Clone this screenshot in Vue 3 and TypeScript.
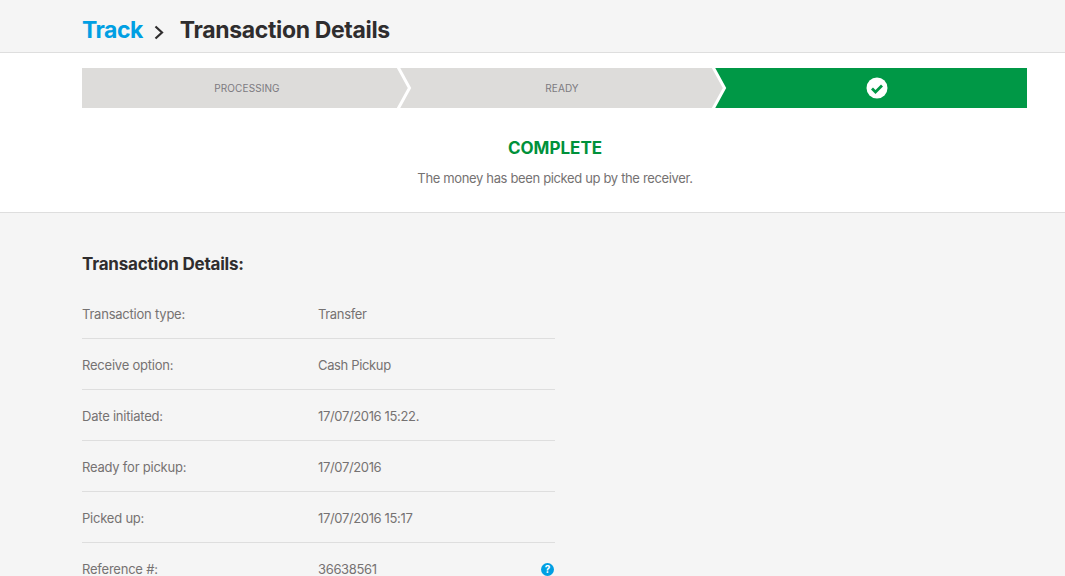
<script setup lang="ts">
const rows = [
  { label: "Transaction type:", value: "Transfer" },
  { label: "Receive option:", value: "Cash Pickup" },
  { label: "Date initiated:", value: "17/07/2016 15:22." },
  { label: "Ready for pickup:", value: "17/07/2016" },
  { label: "Picked up:", value: "17/07/2016 15:17" },
  { label: "Reference #:", value: "36638561", help: true },
]
</script>

<template>
  <div class="page">
    <header class="top">
      <a class="crumb">Track</a>
      <svg class="sep" width="12" height="16" viewBox="0 0 12 16">
        <path d="M2.5 2.5 L9 8.5 L2.5 14.5" fill="none" stroke="#2f2d2e" stroke-width="2.2" />
      </svg>
      <h1>Transaction Details</h1>
    </header>

    <section class="status">
      <div class="steps">
        <div class="step">
          <span class="stepText">PROCESSING</span>
          <svg class="chev" width="18" height="40" viewBox="0 0 18 40">
            <path d="M0 0 L2 0 L13 20 L2 40 L0 40 Z" fill="#dddcda" />
            <path d="M2 -1 L13.5 20 L2 41" fill="none" stroke="#fff" stroke-width="3" />
          </svg>
        </div>
        <div class="step">
          <span class="stepText">READY</span>
          <svg class="chev" width="18" height="40" viewBox="0 0 18 40">
            <path d="M0 0 L2 0 L13 20 L2 40 L0 40 Z" fill="#dddcda" />
            <path d="M2 -1 L13.5 20 L2 41" fill="none" stroke="#fff" stroke-width="3" />
          </svg>
        </div>
        <div class="step done">
          <svg width="22" height="22" viewBox="0 0 22 22">
            <circle cx="11" cy="11" r="10.5" fill="#fff" />
            <path d="M6 11.5 L9.5 15 L16 8.5" fill="none" stroke="#009846" stroke-width="2.8" />
          </svg>
        </div>
      </div>
      <h2>COMPLETE</h2>
      <p>The money has been picked up by the receiver.</p>
    </section>

    <section class="details">
      <h3>Transaction Details:</h3>
      <div v-for="row in rows" :key="row.label" class="row">
        <span class="label">{{ row.label }}</span>
        <span class="value">{{ row.value }}</span>
        <svg v-if="row.help" class="help" width="13" height="13" viewBox="0 0 13 13">
          <circle cx="6.5" cy="6.5" r="6.5" fill="#009fe3" />
          <text x="6.5" y="10" text-anchor="middle" font-size="10" font-weight="700" fill="#fff" font-family="Inter, sans-serif">?</text>
        </svg>
      </div>
    </section>
  </div>
</template>

<style>
html, body {
  margin: 0;
  height: 100%;
  overflow: hidden;
  background: #f5f5f5;
}
</style>

<style scoped>
.page {
  font-family: Inter, "Liberation Sans", sans-serif;
  color: #757272;
  height: 576px;
  overflow: hidden;
}

.top {
  height: 53px;
  border-bottom: 1px solid #dedede;
  display: flex;
  align-items: center;
  padding: 8px 0 0 82px;
  box-sizing: border-box;
  background: #f5f5f5;
}

.crumb {
  color: #009fe3;
  font-size: 23px;
  font-weight: 700;
  letter-spacing: -0.5px;
}

.sep {
  margin: 3px 15px 0 10px;
}

h1 {
  margin: 0;
  font-size: 23px;
  font-weight: 700;
  letter-spacing: -0.35px;
  color: #2f2d2e;
}

.status {
  background: #fff;
  border-bottom: 1px solid #dedede;
  height: 160px;
  padding-top: 15px;
  box-sizing: border-box;
  text-align: center;
}

.steps {
  display: flex;
  width: 945px;
  height: 40px;
  margin-left: 82px;
}

.step {
  position: relative;
  flex: 0 0 315px;
  box-sizing: border-box;
  background: #dddcda;
  display: flex;
  align-items: center;
  justify-content: center;
}

.stepText {
  margin-right: -15px;
  font-size: 10px;
  letter-spacing: 0.1px;
  color: #7c7a80;
}

.chev {
  position: absolute;
  left: 100%;
  top: 0;
  margin-left: -1px;
  z-index: 1;
}

.done {
  background: #009846;
  padding-left: 15px;
}

h2 {
  margin: 30px 0 0;
  width: 1110px;
  font-size: 17px;
  line-height: 20px;
  font-weight: 700;
  color: #00913a;
}

.status p {
  margin: 11px 0 0;
  width: 1110px;
  font-size: 13px;
  line-height: 18px;
  letter-spacing: -0.35px;
}

.details {
  padding: 0 0 0 82px;
}

h3 {
  margin: 40px 0 0;
  font-size: 17px;
  line-height: 22px;
  font-weight: 700;
  letter-spacing: -0.2px;
  color: #2f2d2e;
}

.row {
  width: 473px;
  height: 51px;
  padding-top: 2px;
  box-sizing: border-box;
  border-bottom: 1px solid #dedede;
  display: flex;
  align-items: center;
  font-size: 13px;
}

h3 + .row {
  margin-top: 13px;
}

.label {
  width: 236px;
  letter-spacing: -0.22px;
}

.value {
  flex: 1;
  letter-spacing: -0.35px;
}

.help {
  margin-right: 1px;
}
</style>
